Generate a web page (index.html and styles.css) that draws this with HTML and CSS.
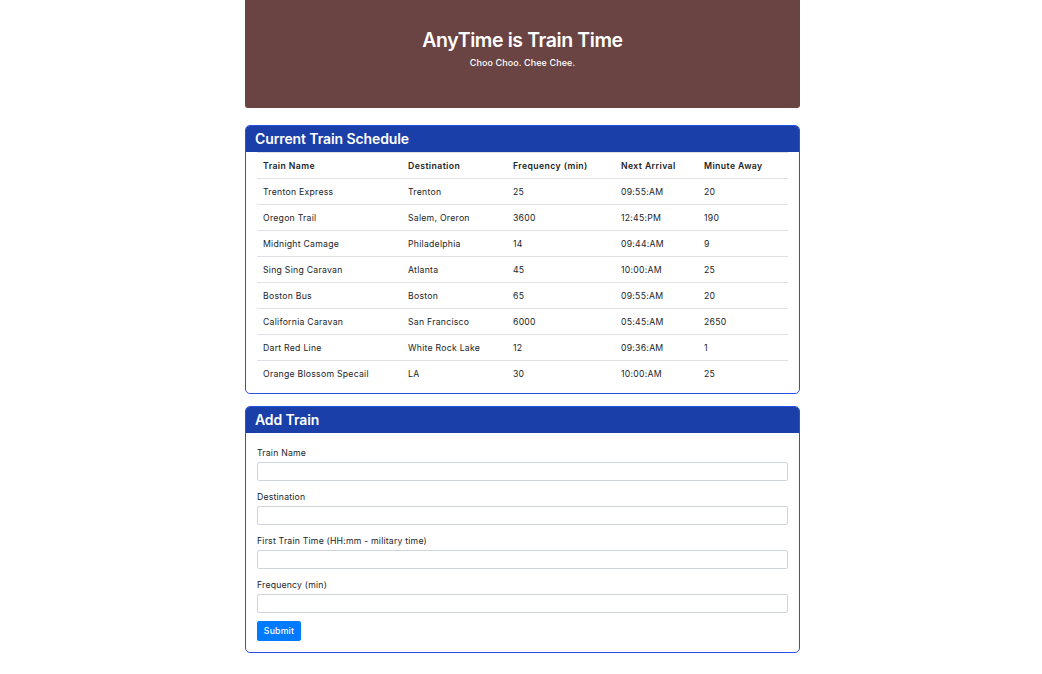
FILE: index.html
```html
<!DOCTYPE html>
<html>
<head>
<meta charset="utf-8">
<link rel="stylesheet" href="styles.css">
</head>
<body>
<div class="container">
  <header class="jumbo">
    <h1 class="jumbo-title">AnyTime is Train Time</h1>
    <p class="jumbo-sub">Choo Choo. Chee Chee.</p>
  </header>

  <section class="card card-schedule">
    <div class="card-header">Current Train Schedule</div>
    <div class="card-body table-body">
      <table class="table">
        <thead>
          <tr>
            <th class="c1">Train Name</th>
            <th class="c2">Destination</th>
            <th class="c3">Frequency (min)</th>
            <th class="c4">Next Arrival</th>
            <th class="c5">Minute Away</th>
          </tr>
        </thead>
        <tbody>
          <tr><td>Trenton Express</td><td>Trenton</td><td>25</td><td>09:55:AM</td><td>20</td></tr>
          <tr><td>Oregon Trail</td><td>Salem, Oreron</td><td>3600</td><td>12:45:PM</td><td>190</td></tr>
          <tr><td>Midnight Camage</td><td>Philadelphia</td><td>14</td><td>09:44:AM</td><td>9</td></tr>
          <tr><td>Sing Sing Caravan</td><td>Atlanta</td><td>45</td><td>10:00:AM</td><td>25</td></tr>
          <tr><td>Boston Bus</td><td>Boston</td><td>65</td><td>09:55:AM</td><td>20</td></tr>
          <tr><td>California Caravan</td><td>San Francisco</td><td>6000</td><td>05:45:AM</td><td>2650</td></tr>
          <tr><td>Dart Red Line</td><td>White Rock Lake</td><td>12</td><td>09:36:AM</td><td>1</td></tr>
          <tr><td>Orange Blossom Specail</td><td>LA</td><td>30</td><td>10:00:AM</td><td>25</td></tr>
        </tbody>
      </table>
    </div>
  </section>

  <section class="card card-add">
    <div class="card-header">Add Train</div>
    <form class="card-body form-body">
      <div class="form-group">
        <label class="label">Train Name</label>
        <input class="input" type="text">
      </div>
      <div class="form-group">
        <label class="label">Destination</label>
        <input class="input" type="text">
      </div>
      <div class="form-group">
        <label class="label">First Train Time (HH:mm - military time)</label>
        <input class="input" type="text">
      </div>
      <div class="form-group">
        <label class="label">Frequency (min)</label>
        <input class="input" type="text">
      </div>
      <div class="actions">
        <button class="btn" type="button">Submit</button>
      </div>
    </form>
  </section>
</div>
</body>
</html>
```

FILE: styles.css
```css
* { box-sizing: border-box; }
html, body { margin: 0; padding: 0; background: #fff; }
body {
  font-family: Inter, "Liberation Sans", Arial, sans-serif;
  color: #212529;
  padding-left: 3px;
}
.container {
  width: 555px;
  margin: 0 auto;
  padding-bottom: 20px;
}
.jumbo {
  background: #6a4343;
  height: 108px;
  border-radius: 0 0 3px 3px;
  display: flex;
  flex-direction: column;
  align-items: center;
  padding-top: 28px;
  color: #fff;
}
.jumbo-title {
  margin: 0;
  font-size: 19.5px;
  font-weight: 600;
  line-height: 24px;
  letter-spacing: -0.4px;
}
.jumbo-sub {
  margin: 5px 0 0;
  font-size: 9px;
  line-height: 12px;
  font-weight: 500;
  letter-spacing: 0.1px;
}
.card {
  border: 1px solid #2a50ec;
  border-radius: 5px;
  overflow: hidden;
  background: #fff;
}
.card-schedule { margin-top: 17px; }
.card-add { margin-top: 12px; }
.card-header {
  background: #1a3fa8;
  color: #fff;
  font-size: 14px;
  font-weight: 600;
  height: 26px;
  line-height: 25px;
  padding-left: 9px;
  letter-spacing: -0.1px;
}
.table-body {
  padding: 0 11px 6px 11px;
}
.table {
  width: 100%;
  border-collapse: collapse;
  font-size: 8.7px;
}
.table th, .table td {
  text-align: left;
  padding: 0 6px;
  height: 26px;
  border-top: 1px solid #dee2e6;
  vertical-align: middle;
  color: #212529;
}
.table th { font-weight: 600; letter-spacing: 0.4px; }
.table td { letter-spacing: 0.25px; }
.c1 { width: 145px; }
.c2 { width: 105px; }
.c3 { width: 108px; }
.c4 { width: 83px; }
.form-body {
  padding: 14px 11px 11px 11px;
  display: flex;
  flex-direction: column;
  gap: 10px;
}
.form-group {
  display: flex;
  flex-direction: column;
}
.label {
  font-size: 8.7px;
  line-height: 13px;
  margin-bottom: 2px;
  letter-spacing: 0.2px;
  color: #212529;
}
.input {
  height: 19px;
  border: 1px solid #ced4da;
  border-radius: 2px;
  background: #fff;
  width: 100%;
  margin: 0;
}
.actions { margin-top: -2px; display: flex; }
.btn {
  background: #007bff;
  border: 1px solid #007bff;
  color: #fff;
  font-family: inherit;
  font-size: 8.7px;
  font-weight: 500;
  height: 20px;
  width: 44px;
  padding: 0;
  border-radius: 2px;
  letter-spacing: 0.2px;
}
```
